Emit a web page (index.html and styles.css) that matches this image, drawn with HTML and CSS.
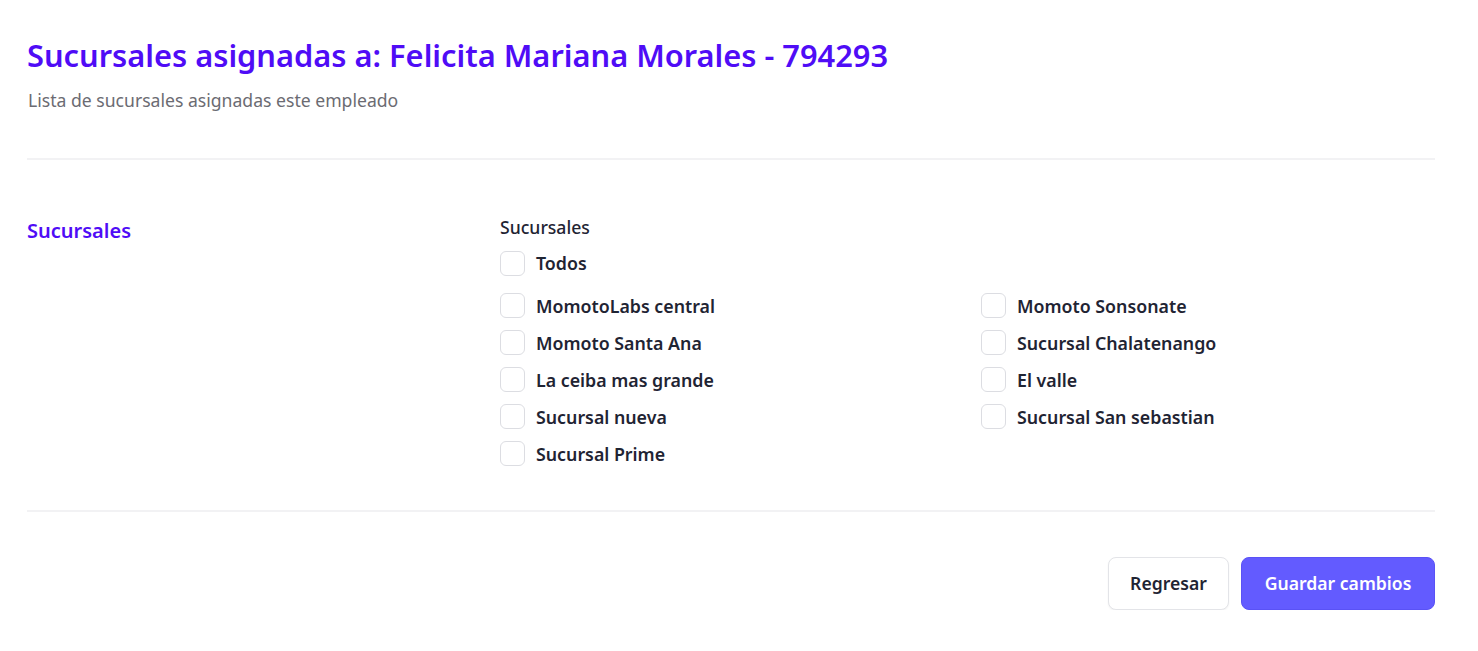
FILE: index.html
```html
<!DOCTYPE html>
<html lang="es">
<head>
<meta charset="utf-8">
<title>Sucursales asignadas</title>
<link rel="stylesheet" href="styles.css">
</head>
<body>
<main class="page">
  <header class="head">
    <h1 class="title">Sucursales asignadas a: Felicita Mariana Morales - 794293</h1>
    <p class="subtitle">Lista de sucursales asignadas este empleado</p>
  </header>
  <hr class="divider">
  <section class="section">
    <h2 class="section-title">Sucursales</h2>
    <div class="field">
      <div class="field-label">Sucursales</div>
      <label class="check all"><span class="box"></span><span>Todos</span></label>
      <div class="grid">
        <label class="check"><span class="box"></span><span>MomotoLabs central</span></label>
        <label class="check"><span class="box"></span><span>Momoto Sonsonate</span></label>
        <label class="check"><span class="box"></span><span>Momoto Santa Ana</span></label>
        <label class="check"><span class="box"></span><span>Sucursal Chalatenango</span></label>
        <label class="check"><span class="box"></span><span>La ceiba mas grande</span></label>
        <label class="check"><span class="box"></span><span>El valle</span></label>
        <label class="check"><span class="box"></span><span>Sucursal nueva</span></label>
        <label class="check"><span class="box"></span><span>Sucursal San sebastian</span></label>
        <label class="check"><span class="box"></span><span>Sucursal Prime</span></label>
      </div>
    </div>
  </section>
  <hr class="divider">
  <div class="actions">
    <button class="btn btn-light">Regresar</button>
    <button class="btn btn-primary">Guardar cambios</button>
  </div>
</main>
</body>
</html>
```

FILE: styles.css
```css
* { box-sizing: border-box; }
html, body { margin: 0; background: #fff; }
body {
  font-family: "Noto Sans", "Open Sans", sans-serif;
  color: #1f2433;
}
.page {
  padding: 30px 43px 0 27px;
}
.head { padding-bottom: 46px; }
.title {
  margin: 0;
  font-size: 30.8px;
  line-height: 50px;
  font-weight: 600;
  color: #4f0cf6;
}
.subtitle {
  margin: 8px 0 0 1px;
  font-size: 17.6px;
  line-height: 24px;
  color: #6b6b72;
}
.divider {
  margin: 0;
  border: 0;
  border-top: 2px solid #f2f2f4;
}
.section {
  display: grid;
  grid-template-columns: 473px 1fr;
  padding: 55px 0 38px;
}
.section-title {
  margin: 0;
  font-size: 20px;
  line-height: 32px;
  font-weight: 600;
  color: #4f0cf6;
}
.field-label {
  font-size: 17.6px;
  font-weight: 500;
  line-height: 24px;
  margin-bottom: 11px;
}
.check {
  display: flex;
  align-items: center;
  gap: 11px;
  height: 37px;
  font-size: 17.8px;
  font-weight: 600;
  color: #1f2433;
}
.check.all { height: 26px; margin-bottom: 11px; }
.box {
  width: 25px;
  height: 25px;
  border: 1.5px solid #dcdde2;
  border-radius: 6px;
  background: #fff;
  flex: none;
}
.grid {
  display: grid;
  grid-template-columns: 481px 1fr;
}
.actions {
  display: flex;
  justify-content: flex-end;
  gap: 12px;
  padding-top: 45px;
}
.btn {
  font-family: inherit;
  font-size: 17.6px;
  font-weight: 600;
  height: 53px;
  padding: 0 0 2px;
  border-radius: 8px;
  cursor: pointer;
}
.btn-light {
  width: 121px;
  background: #fff;
  border: 1px solid #e3e4e8;
  color: #1f2433;
  box-shadow: 0 1px 2px rgba(0,0,0,0.05);
}
.btn-primary {
  width: 194px;
  background: #635bff;
  border: 1px solid #5a52f5;
  color: #fff;
}
```
